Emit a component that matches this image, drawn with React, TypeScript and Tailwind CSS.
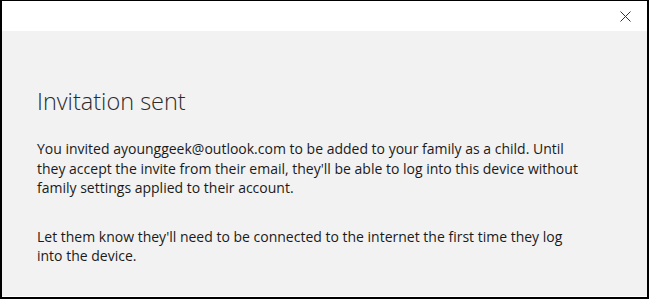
export default function App() {
  return (
    <div
      className="flex h-[299px] w-[649px] flex-col border-x-2 border-t border-b-2 border-black bg-[#f2f2f2] text-[#1a1a1a]"
      style={{ fontFamily: '"Open Sans", "Noto Sans", sans-serif' }}
    >
      <div className="flex h-[30px] items-center justify-end border-b border-white bg-white pr-[16px]">
        <svg width="11" height="11" viewBox="0 0 11 11" className="mt-[1px] text-[#333]">
          <path d="M0.5 0.5L10.5 10.5M10.5 0.5L0.5 10.5" stroke="currentColor" strokeWidth="1" />
        </svg>
      </div>
      <div className="flex flex-1 flex-col pl-[35px] pt-[55px]">
        <h1 className="text-[23.5px] font-light leading-[30px] text-[#2b2b2b]">Invitation sent</h1>
        <p className="mt-[23px] max-w-[550px] text-[14px] leading-[19.5px]">
          You invited ayounggeek@outlook.com to be added to your family as a child. Until they accept the invite from their email, they'll be able to log into this device without family settings applied to their account.
        </p>
        <p className="mt-[29px] max-w-[550px] text-[14px] leading-[19.5px]">
          Let them know they'll need to be connected to the internet the first time they log into the device.
        </p>
      </div>
      <div className="h-px bg-white" />
    </div>
  );
}
